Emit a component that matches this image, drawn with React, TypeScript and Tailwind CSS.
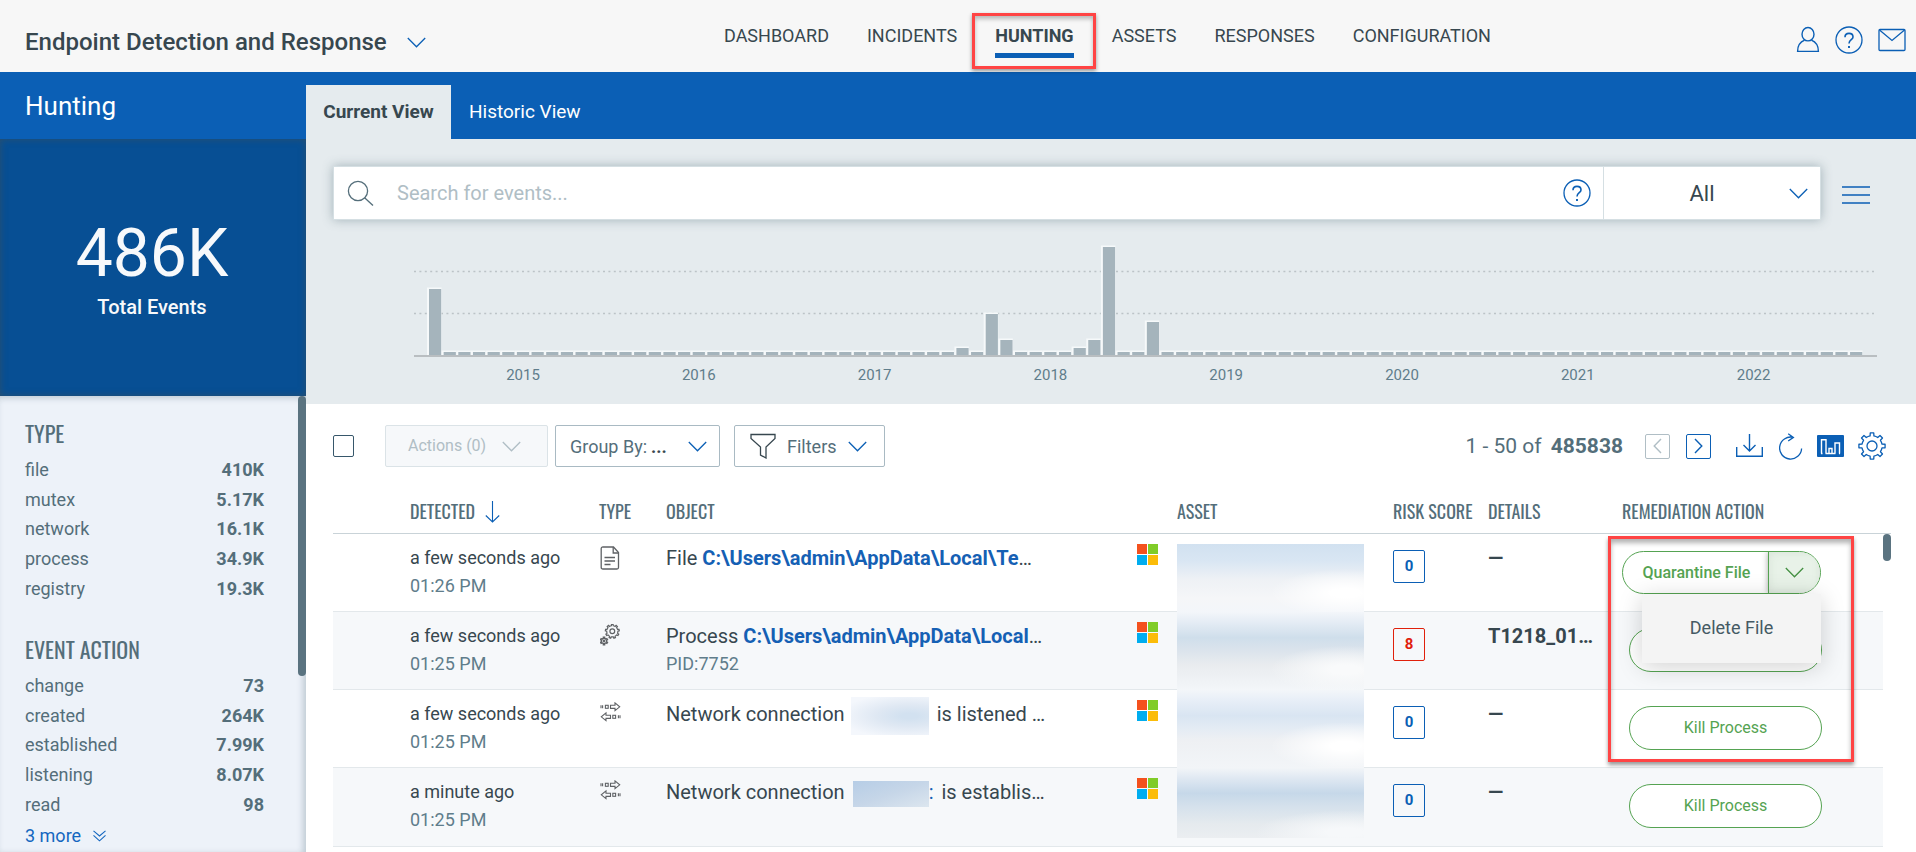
import React from 'react'

const BLUE = '#0b5fb5'

// ---------- data ----------

const navItems = ['DASHBOARD', 'INCIDENTS', 'HUNTING', 'ASSETS', 'RESPONSES', 'CONFIGURATION']

const typeFacets = [
  { name: 'file', count: '410K' },
  { name: 'mutex', count: '5.17K' },
  { name: 'network', count: '16.1K' },
  { name: 'process', count: '34.9K' },
  { name: 'registry', count: '19.3K' },
]

const actionFacets = [
  { name: 'change', count: '73' },
  { name: 'created', count: '264K' },
  { name: 'established', count: '7.99K' },
  { name: 'listening', count: '8.07K' },
  { name: 'read', count: '98' },
]

// month index -> bar height, everything else is the 3px minimum
const peaks: Record<number, number> = { 0: 66, 36: 7, 38: 41, 39: 15, 44: 7, 45: 15, 46: 108, 49: 33 }
const MONTHS = 98
const years = [2015, 2016, 2017, 2018, 2019, 2020, 2021, 2022]

type EventType = 'file' | 'process' | 'network'

interface EventRow {
  ago: string
  time: string
  type: EventType
  object: React.ReactNode
  sub?: string
  score: number
  details: string
}

const rows: EventRow[] = [
  {
    ago: 'a few seconds ago',
    time: '01:26 PM',
    type: 'file',
    object: (
      <>
        File <a href="#" className="font-bold text-[#1560b4]">C:\Users\admin\AppData\Local\Te</a>…
      </>
    ),
    score: 0,
    details: '—',
  },
  {
    ago: 'a few seconds ago',
    time: '01:25 PM',
    type: 'process',
    object: (
      <>
        Process <a href="#" className="font-bold text-[#1560b4]">C:\Users\admin\AppData\Local</a>…
      </>
    ),
    sub: 'PID:7752',
    score: 8,
    details: 'T1218_01…',
  },
  {
    ago: 'a few seconds ago',
    time: '01:25 PM',
    type: 'network',
    object: (
      <>
        Network connection
        <span className="-my-2 mr-2 ml-[6px] inline-block h-[38px] w-[78px] bg-[radial-gradient(ellipse_at_75%_50%,#d2e1f0_10%,#dfe8f3_40%,#f4f7fc_85%)] align-middle" />
        is listened …
      </>
    ),
    score: 0,
    details: '—',
  },
  {
    ago: 'a minute ago',
    time: '01:25 PM',
    type: 'network',
    object: (
      <>
        Network connection
        <span className="ml-2 inline-block h-[26px] w-[76px] bg-linear-to-br from-[#b6cde6] via-[#c6d6e8] to-[#dce6ef] align-middle" />
        <span className="mr-2 text-[#1560b4]">:</span>
        is establis…
      </>
    ),
    score: 0,
    details: '—',
  },
]

// ---------- icons ----------

function gearPath(c: number, outer: number, inner: number, teeth: number) {
  const step = (Math.PI * 2) / teeth
  const pt = (r: number, a: number) => `${(c + r * Math.cos(a)).toFixed(2)} ${(c + r * Math.sin(a)).toFixed(2)}`
  let d = ''
  for (let i = 0; i < teeth; i++) {
    const a = i * step - Math.PI / 2
    d += `${i === 0 ? 'M' : 'L'}${pt(inner, a - step * 0.24)}L${pt(outer, a - step * 0.17)}`
    d += `L${pt(outer, a + step * 0.17)}L${pt(inner, a + step * 0.24)}`
    d += `A${inner} ${inner} 0 0 1 ${pt(inner, a + step * 0.76)}`
  }
  return d + 'Z'
}

interface ChevronProps {
  color?: string
}

function Chevron({ color = BLUE }: ChevronProps) {
  return (
    <svg width="19" height="11" viewBox="0 0 19 11" fill="none" stroke={color} strokeWidth="1.3" className="shrink-0">
      <path d="M0.8 1L9.5 9.8L18.2 1" />
    </svg>
  )
}

function HelpIcon() {
  return (
    <svg width="28" height="28" viewBox="0 0 28 28" fill="none" stroke={BLUE} strokeWidth="1.3">
      <circle cx="14" cy="14" r="13" />
      <path d="M10 11.2C10 8.8 11.7 7.4 14 7.4S18 8.8 18 11C18 13.8 14 13.8 14 17.6" strokeWidth="1.6" />
      <path d="M14 20V22" strokeWidth="1.9" />
    </svg>
  )
}

function UserIcon() {
  return (
    <svg width="24" height="28" viewBox="0 0 24 28" fill="none" stroke={BLUE} strokeWidth="1.4">
      <ellipse cx="12" cy="8.2" rx="6" ry="6.7" />
      <path d="M8.6 14.2C4.6 15.8 1.6 19.4 1.6 25.4H22.4C22.4 19.4 19.4 15.8 15.4 14.2" />
    </svg>
  )
}

function MailIcon() {
  return (
    <svg width="28" height="24" viewBox="0 0 28 24" fill="none" stroke={BLUE} strokeWidth="1.3">
      <rect x="1" y="1.5" width="26" height="21" rx="1" />
      <path d="M1.5 2L14 12.5L26.5 2" />
    </svg>
  )
}

function FileIcon() {
  return (
    <svg width="20" height="24" viewBox="0 0 20 24" fill="none" stroke="#5f6265" strokeWidth="1.3">
      <path d="M3 1H13.5L18.5 6.5V21.5Q18.5 23 17 23H3Q1.2 23 1.2 21.5V2.5Q1.2 1 3 1Z" />
      <path d="M13.2 1V7H18.5M4.5 11.5H15M4.5 15H15M4.5 18.5H10.5" />
    </svg>
  )
}

function ProcessIcon() {
  return (
    <svg width="20" height="22" viewBox="0 0 20 22" fill="none" stroke="#5f6265" strokeWidth="1.2">
      <g transform="translate(5 0)">
        <path d={gearPath(7.3, 7, 5.6, 9)} />
        <circle cx="7.3" cy="7.3" r="2.4" />
      </g>
      <g transform="translate(0 13)">
        <path d={gearPath(4, 3.8, 2.6, 6)} strokeWidth="1.3" />
        <circle cx="4" cy="4" r="0.8" />
      </g>
    </svg>
  )
}

function NetworkIcon() {
  return (
    <svg width="21" height="20" viewBox="0 0 21 20" fill="none" stroke="#5f6265" strokeWidth="1.1">
      <path d="M10.5 3.2H15V0.9L19.7 4.8L15 8.7V6.4H10.5Z" />
      <rect x="5.4" y="3.3" width="2.8" height="3" />
      <path d="M1 3.3V6.3M2.6 3.3V6.3" />
      <path d="M10.5 13.2H6V10.9L1.3 14.8L6 18.7V16.4H10.5Z" />
      <rect x="12.8" y="13.3" width="2.8" height="3" />
      <path d="M18.4 13.3V16.3M20 13.3V16.3" />
    </svg>
  )
}

const typeIcons: Record<EventType, React.ReactNode> = {
  file: <FileIcon />,
  process: <ProcessIcon />,
  network: <NetworkIcon />,
}

function WindowsIcon() {
  return (
    <svg width="21" height="21" viewBox="0 0 21 21">
      <rect width="10" height="10" fill="#f4511e" />
      <rect x="11" width="10" height="10" fill="#80cc28" />
      <rect y="11" width="10" height="10" fill="#00adef" />
      <rect x="11" y="11" width="10" height="10" fill="#fbbc09" />
    </svg>
  )
}

// ---------- header ----------

function Header() {
  return (
    <header className="flex h-[72px] items-center bg-[#f7f7f7] pr-[10px] pl-[25px]">
      <button type="button" className="flex w-[699px] items-center gap-5 pt-3 text-[24px] leading-8 font-medium text-[#37474f]">
        Endpoint Detection and Response
        <Chevron />
      </button>
      <nav className="flex gap-[38px] self-start text-[18px] leading-6 text-[#37474f]">
        {navItems.map((item) =>
          item === 'HUNTING' ? (
            <a key={item} href="#" aria-current="page" className="relative block border-b-5 border-[#0b5fb5] pt-6 pb-[5px] font-bold">
              {item}
              <span className="absolute top-[13px] -right-[22px] -left-[23px] h-[56px] border-3 border-[#ff4444] shadow-[0_2px_4px_rgba(0,0,0,0.4),inset_0_3px_4px_rgba(0,0,0,0.25)]" />
            </a>
          ) : (
            <a key={item} href="#" className="block pt-6">
              {item}
            </a>
          )
        )}
      </nav>
      <div className="ml-auto flex items-center gap-[15px] pt-2">
        <button type="button" aria-label="Account">
          <UserIcon />
        </button>
        <button type="button" aria-label="Help">
          <HelpIcon />
        </button>
        <button type="button" aria-label="Messages">
          <MailIcon />
        </button>
      </div>
    </header>
  )
}

// ---------- sidebar ----------

interface FacetProps {
  title: string
  items: { name: string; count: string }[]
}

function Facet({ title, items }: FacetProps) {
  return (
    <section>
      <h2 className="font-['Oswald','Liberation_Sans_Narrow',sans-serif] text-[22px] leading-8 text-[#546e7a]">{title}</h2>
      <ul className="mt-[6px] grid h-[148px] grid-rows-5 text-[18px] text-[#546e7a]">
        {items.map((item) => (
          <li key={item.name} className="flex items-center justify-between">
            <span>{item.name}</span>
            <span className="font-bold">{item.count}</span>
          </li>
        ))}
      </ul>
    </section>
  )
}

function Sidebar() {
  return (
    <aside className="flex w-[306px] shrink-0 flex-col">
      <h1 className="h-[67px] bg-[#0b5fb5] pt-[18px] pl-[25px] text-[26px] leading-8 text-white">Hunting</h1>
      <div className="flex h-[257px] flex-col items-center bg-[#074f94] pt-[79px] pr-[2px] text-[#f7f9fb] shadow-[inset_0_0_7px_rgba(60,80,90,0.7)]">
        <span className="text-[66px] leading-[72px]">486K</span>
        <span className="mt-[3px] text-[20px] leading-7 font-medium">Total Events</span>
      </div>
      <div className="relative flex-1 bg-[#edf2f9] pt-[21px] pr-[42px] pl-[25px] shadow-[inset_-3px_2px_6px_rgba(84,110,122,0.3)]">
        <Facet title="TYPE" items={typeFacets} />
        <div className="mt-[30px]">
          <Facet title="EVENT ACTION" items={actionFacets} />
        </div>
        <button type="button" className="mt-[5px] flex items-center gap-3 text-[18px] leading-6 text-[#1467c0]">
          3 more
          <svg width="13" height="12" viewBox="0 0 13 12" fill="none" stroke="#1467c0" strokeWidth="1.1">
            <path d="M0.5 0.8L6.5 6L12.5 0.8M0.5 5.3L6.5 10.8L12.5 5.3" />
          </svg>
        </button>
        <div className="absolute top-0 right-0 h-[280px] w-2 rounded-full bg-[#5a7380]" />
      </div>
    </aside>
  )
}

// ---------- search + timeline ----------

function SearchBar() {
  return (
    <div className="flex items-center">
      <div className="flex h-[54px] flex-1 items-center border border-[#d5dfe3] bg-white shadow-[0_0_10px_rgba(84,110,122,0.45)]">
        <svg width="27" height="27" viewBox="0 0 27 27" fill="none" stroke="#546e7a" strokeWidth="1.3" className="ml-[13px]">
          <circle cx="11" cy="11" r="9.6" />
          <path d="M17.6 17.8L26 25.6" />
        </svg>
        <input
          type="text"
          aria-label="Search for events"
          placeholder="Search for events..."
          className="ml-[23px] h-full flex-1 text-[20px] text-[#37474f] outline-none placeholder:text-[#b0bec5]"
        />
        <button type="button" aria-label="Search help" className="mr-[12px]">
          <HelpIcon />
        </button>
        <div className="relative flex h-full w-[217px] items-center border-l border-[#d5dfe3]">
          <select aria-label="Search scope" className="h-full w-full appearance-none pr-5 text-[22px] text-[#37474f] outline-none [text-align-last:center]">
            <option>All</option>
          </select>
          <span className="pointer-events-none absolute right-3">
            <Chevron />
          </span>
        </div>
      </div>
      <button type="button" aria-label="Menu" className="mt-[3px] ml-[21px]">
        <svg width="28" height="20" viewBox="0 0 28 20" stroke={BLUE} strokeWidth="1.3">
          <path d="M0 2H28M0 10H28M0 18H28" />
        </svg>
      </button>
    </div>
  )
}

function Timeline() {
  const step = 14.65
  return (
    <svg viewBox="0 0 1463 150" className="mt-[20px] ml-[81px] block w-[calc(100%-74px)]" role="img" aria-label="Events over time">
      <path d="M0 31.5H1463M0 73.5H1463" stroke="#bcc3c7" strokeWidth="1.6" strokeDasharray="2 3.4" />
      {Array.from({ length: MONTHS }, (_, i) => {
        const h = peaks[i] ?? 3
        return (
          <g key={i}>
            <rect x={14 + i * step - 1} y={115 - h - 1.5} width="14.5" height={h + 1.5} fill="#f6f9fa" />
            <rect x={15 + i * step} y={115 - h} width="12.2" height={h} fill="#a5b4bc" />
          </g>
        )
      })}
      <path d="M0 116H1463" stroke="#b9bec1" strokeWidth="2" />
      {years.map((year, i) => (
        <text key={year} x={109 + i * step * 12} y="140" textAnchor="middle" fontSize="15" fill="#607d8b">
          {year}
        </text>
      ))}
    </svg>
  )
}

// ---------- toolbar ----------

function Toolbar() {
  return (
    <div className="flex items-center">
      <input type="checkbox" aria-label="Select all events" className="h-[22px] w-[21px] appearance-none rounded-[2px] border border-[#37576b] bg-white" />
      <button
        type="button"
        disabled
        className="ml-[31px] flex h-[42px] w-[163px] items-center gap-4 rounded-[2px] border border-[#dbe3e7] bg-[#f6f8fa] pl-[22px] text-[16px] text-[#b0bec5]"
      >
        Actions (0)
        <Chevron color="#b0bec5" />
      </button>
      <label className="relative ml-[7px] flex h-[42px] w-[165px] items-center rounded-[2px] border border-[#a9bac3] pl-[14px] text-[18px] whitespace-nowrap text-[#546e7a]">
        Group By:
        <select className="ml-1 w-8 appearance-none font-bold text-[#37474f] outline-none">
          <option>...</option>
        </select>
        <span className="pointer-events-none absolute top-[15px] right-3">
          <Chevron />
        </span>
      </label>
      <button type="button" className="ml-[14px] flex h-[42px] w-[151px] items-center gap-[11px] rounded-[2px] border border-[#a9bac3] pl-[15px] text-[18px] text-[#546e7a]">
        <svg width="26" height="26" viewBox="0 0 26 26" fill="none" stroke="#37474f" strokeWidth="1.3">
          <path d="M1 1.5H25V5.5L16 14V25L10.5 22V14L1 5.5Z" />
        </svg>
        Filters
        <Chevron />
      </button>

      <div className="ml-auto flex items-center">
        <p className="mr-[22px] pt-[2px] text-[21px] text-[#546e7a]">
          1 - 50 of <b className="ml-1 font-bold">485838</b>
        </p>
        <button type="button" aria-label="Previous page" className="mr-4 flex size-[25px] items-center justify-center rounded-[2px] border border-[#b0bec5]">
          <svg width="9" height="16" viewBox="0 0 9 16" fill="none" stroke="#b0bec5" strokeWidth="1.4">
            <path d="M8 1L1.2 8L8 15" />
          </svg>
        </button>
        <button type="button" aria-label="Next page" className="mr-[25px] flex size-[25px] items-center justify-center rounded-[2px] border border-[#0b5fb5]">
          <svg width="9" height="16" viewBox="0 0 9 16" fill="none" stroke={BLUE} strokeWidth="1.4">
            <path d="M1 1L7.8 8L1 15" />
          </svg>
        </button>
        <button type="button" aria-label="Download" className="mr-4">
          <svg width="27" height="24" viewBox="0 0 27 24" fill="none" stroke={BLUE} strokeWidth="1.4">
            <path d="M13.5 0V17M7.5 11L13.5 17L19.5 11M0.7 13V22.3H26.3V13" />
          </svg>
        </button>
        <button type="button" aria-label="Refresh" className="mr-[14px]">
          <svg width="24" height="27" viewBox="0 0 24 27" fill="none" stroke={BLUE} strokeWidth="1.3">
            <path d="M14 4.3A11 11 0 1 0 22.6 15.5M9.2 0.8L14.4 4.4L9.2 8" />
          </svg>
        </button>
        <button type="button" aria-label="Toggle chart" className="mr-[14px]">
          <svg width="27" height="22" viewBox="0 0 27 22" fill="none">
            <rect width="27" height="22" rx="1" fill={BLUE} />
            <path d="M4.5 18.5V4.8H9V18.5M12 18.5V13.5H15V18.5M18 18.5V8H22.5V18.5M4 18.5H5.5M8.5 18.5H18.5M22 18.5H23" stroke="#fff" strokeWidth="1.4" />
          </svg>
        </button>
        <button type="button" aria-label="Settings">
          <svg width="28" height="28" viewBox="0 0 28 28" fill="none" stroke={BLUE} strokeWidth="1.3" strokeLinejoin="round">
            <path d={gearPath(14, 13.2, 10.2, 8)} />
            <circle cx="14" cy="14" r="5" />
          </svg>
        </button>
      </div>
    </div>
  )
}

// ---------- table ----------

// redacted host names, one long smear running through the column
const smears = [
  'mt-[10px] h-[68px] bg-[radial-gradient(75px_24px_at_90%_72%,#ffffff_20%,transparent_100%),linear-gradient(180deg,#d1e1f0_0%,#d9e6f3_25%,#eef1f5_52%,#f5f6f8_80%,#f3f6fa_100%)]',
  'h-[78px] bg-[radial-gradient(75px_24px_at_90%_74%,#f9fafb_20%,transparent_100%),linear-gradient(180deg,#f3f6fa_0%,#e6edf5_12%,#cfdeeb_33%,#dae3ec_48%,#e9ecef_68%,#f3f6f9_100%)]',
  'h-[78px] bg-[radial-gradient(75px_24px_at_90%_72%,#ffffff_20%,transparent_100%),linear-gradient(180deg,#f3f6f9_0%,#e7eef7_14%,#d9e5f2_33%,#e3ebf4_48%,#eef0f3_65%,#f2f5f8_100%)]',
  'mb-2 h-[70px] bg-[radial-gradient(90px_22px_at_90%_92%,#f6f8fa_20%,transparent_100%),linear-gradient(180deg,#f2f5f8_0%,#dfe8f2_15%,#c6d8e9_36%,#d5e1ec_55%,#e5eaee_80%,#ebeef1_100%)]',
]

const pill = 'rounded-full border border-[#55a352] bg-white text-[16px] text-[#55a352]'

function RemediationCell({ index }: { index: number }) {
  if (index === 0) {
    return (
      <div className="relative w-[199px] pt-[17px]">
        <div className={`flex h-[43px] overflow-hidden ${pill}`}>
          <button type="button" className="flex-1 pl-[2px] font-medium">
            Quarantine File
          </button>
          <button
            type="button"
            aria-label="More actions"
            className="flex w-[52px] items-center justify-center border-l border-[#55a352] bg-[#e8f2e8] shadow-[0_0_6px_rgba(0,0,0,0.35),inset_0_0_8px_rgba(120,140,120,0.15)]"
          >
            <Chevron color="#459143" />
          </button>
        </div>
        <div role="menu" className="absolute top-full right-0 z-10 w-[179px] bg-[#f4f4f4] shadow-[0_4px_24px_rgba(0,0,0,0.18)]">
          <button type="button" role="menuitem" className="h-[69px] w-full pb-[2px] text-[18px] text-[#455a64]">
            Delete File
          </button>
        </div>
      </div>
    )
  }
  return (
    <div className="pt-4 pl-[7px]">
      <button type="button" aria-label="Kill Process" className={`block h-[44px] w-[193px] ${pill}`}>
        {index > 1 && 'Kill Process'}
      </button>
    </div>
  )
}

function EventsTable() {
  const th = "h-[52px] border-b border-[#c9d3d8] p-0 pt-2 text-left font-['Oswald','Liberation_Sans_Narrow',sans-serif] text-[18px] font-normal whitespace-nowrap text-[#546e7a]"
  return (
    <div className="relative flex">
      <table className="w-full table-fixed border-separate border-spacing-0">
        <colgroup>
          <col className="w-[77px]" />
          <col className="w-[189px]" />
          <col className="w-[67px]" />
          <col />
          <col className="w-[40px]" />
          <col className="w-[216px]" />
          <col className="w-[95px]" />
          <col className="w-[134px]" />
          <col className="w-[261px]" />
        </colgroup>
        <thead>
          <tr>
            <th className={th} aria-label="Select" />
            <th className={th} aria-sort="descending">
              <span className="flex items-center gap-[10px]">
                DETECTED
                <svg width="15" height="22" viewBox="0 0 15 22" fill="none" stroke={BLUE} strokeWidth="1.1">
                  <path d="M7.5 0V21M0.8 14.5L7.5 21L14.2 14.5" />
                </svg>
              </span>
            </th>
            <th className={th}>TYPE</th>
            <th className={th}>OBJECT</th>
            <th className={th} aria-label="Platform" />
            <th className={th}>ASSET</th>
            <th className={th}>RISK SCORE</th>
            <th className={th}>DETAILS</th>
            <th className={th}>REMEDIATION ACTION</th>
          </tr>
        </thead>
        <tbody>
          {rows.map((row, i) => {
            const td = 'h-[78px] border-b border-[#e3e8eb] p-0 align-top'
            return (
              <tr key={i} className="odd:bg-white even:bg-[#f6f8fa]">
                <td className={td} />
                <td className={`${td} pt-[10px] text-[18px] leading-7 whitespace-nowrap`}>
                  <div className="text-[#37474f]">{row.ago}</div>
                  <div className="text-[#607d8b]">{row.time}</div>
                </td>
                <td className={`${td} pt-3 pl-[1px]`}>{typeIcons[row.type]}</td>
                <td className={`${td} pt-[10px]`}>
                  <div className="flex h-7 items-center text-[20px] whitespace-nowrap text-[#37474f]">
                    <div>{row.object}</div>
                  </div>
                  {row.sub && <div className="text-[18px] leading-7 text-[#607d8b]">{row.sub}</div>}
                </td>
                <td className={`${td} pt-[10px]`}>
                  <WindowsIcon />
                </td>
                <td className={td}>
                  <div className={`relative -mb-px w-[187px] ${smears[i]}`} />
                </td>
                <td className={`${td} pt-4`}>
                  <span
                    className={`flex h-[33px] w-8 items-center justify-center rounded-[2px] border text-[15px] font-bold ${
                      row.score > 0 ? 'border-[#e0200b] text-[#e0200b]' : 'border-[#0b5fb5] text-[#0b5fb5]'
                    }`}
                  >
                    {row.score}
                  </span>
                </td>
                <td className={`${td} pt-[10px] text-[20px] leading-7 font-bold text-[#37474f]`}>{row.details}</td>
                <td className={td}>
                  <RemediationCell index={i} />
                </td>
              </tr>
            )
          })}
        </tbody>
      </table>
      <div className="w-2 shrink-0">
        <div className="h-[52px] border-b border-[#c9d3d8]" />
        <div className="h-[27px] rounded-full bg-[#5a7380]" />
      </div>
      <div className="pointer-events-none absolute top-[54px] right-[37px] z-20 h-[226px] w-[246px] border-3 border-[#ff4444] shadow-[0_3px_4px_rgba(0,0,0,0.4),inset_0_4px_5px_rgba(0,0,0,0.3)]" />
    </div>
  )
}

export default function App() {
  return (
    <div className="flex min-h-screen flex-col bg-white font-['Roboto',sans-serif]">
      <Header />
      <div className="flex flex-1">
        <Sidebar />
        <main className="min-w-0 flex-1">
          <div className="flex h-[67px] items-end bg-[#0b5fb5] text-[19px]" role="tablist">
            <button type="button" role="tab" aria-selected="true" className="h-[54px] w-[145px] bg-[#e5ebee] font-bold text-[#37474f]">
              Current View
            </button>
            <button type="button" role="tab" aria-selected="false" className="h-[54px] px-[18px] text-white">
              Historic View
            </button>
          </div>
          <div className="h-[265px] overflow-hidden bg-[#e5ebee] pt-[27px] pr-[46px] pl-[27px]">
            <SearchBar />
            <Timeline />
          </div>
          <div className="pt-[21px] pr-[25px] pl-[27px]">
            <div className="pr-[5px]">
              <Toolbar />
            </div>
            <div className="mt-[15px]">
              <EventsTable />
            </div>
          </div>
        </main>
      </div>
    </div>
  )
}
